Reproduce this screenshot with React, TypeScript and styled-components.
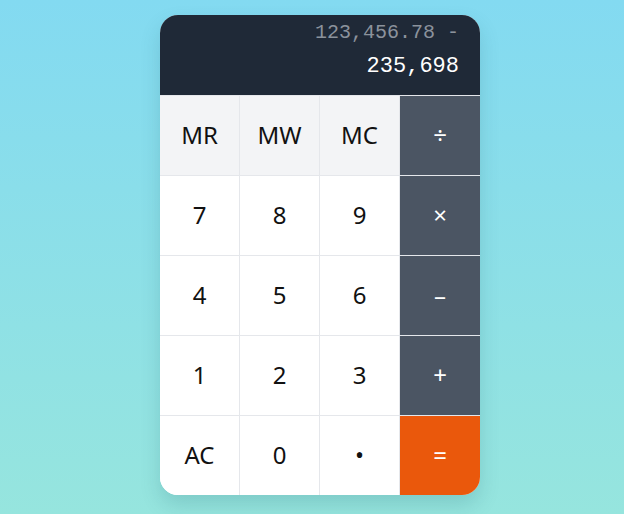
import React from "react";
import styled, { createGlobalStyle } from "styled-components";

const GlobalStyle = createGlobalStyle`
  * { box-sizing: border-box; }
  html, body { margin: 0; padding: 0; }
  body {
    width: 624px;
    height: 514px;
    overflow: hidden;
    background: linear-gradient(180deg, #83daf1 0%, #96e5de 100%);
    font-family: "Noto Sans", "Open Sans", sans-serif;
  }
`;

const Page = styled.div`
  width: 624px;
  height: 514px;
  display: flex;
  justify-content: center;
  align-items: flex-start;
  padding: 15px 0 0 16px;
`;

const Card = styled.div`
  width: 320px;
  border-radius: 18px;
  overflow: hidden;
  background: #ffffff;
  box-shadow: 0 10px 20px rgba(20, 90, 100, 0.18);
`;

const Display = styled.div`
  height: 80px;
  background: #1f2937;
  display: flex;
  flex-direction: column;
  align-items: flex-end;
  padding: 4px 21px 12px;
  font-family: "Liberation Mono", "Courier New", monospace;
`;

const History = styled.div`
  font-size: 20px;
  line-height: 28px;
  color: #8b929c;
  white-space: pre;
`;

const Current = styled.div`
  margin-top: 4px;
  font-size: 22px;
  line-height: 32px;
  color: #ffffff;
`;

const Keys = styled.div`
  display: grid;
  grid-template-columns: repeat(4, 80px);
  grid-auto-rows: 80px;
`;

type Variant = "memory" | "digit" | "op" | "equals";

const bg: Record<Variant, string> = {
  memory: "#f3f4f6",
  digit: "#ffffff",
  op: "#4b5563",
  equals: "#ea580c",
};

const Key = styled.button<{ $variant: Variant; $last?: boolean }>`
  all: unset;
  display: flex;
  align-items: center;
  justify-content: center;
  border-top: 1px solid #e5e7eb;
  border-right: ${(p) => (p.$last ? "none" : "1px solid #e5e7eb")};
  background: ${(p) => bg[p.$variant]};
  color: ${(p) => (p.$variant === "op" || p.$variant === "equals" ? "#ffffff" : "#111111")};
  font-family: "Noto Sans", "Open Sans", sans-serif;
  font-size: 24px;
  padding-bottom: 2px;
  cursor: pointer;
`;

const rows: { label: string; v: Variant }[][] = [
  [
    { label: "MR", v: "memory" },
    { label: "MW", v: "memory" },
    { label: "MC", v: "memory" },
    { label: "÷", v: "op" },
  ],
  [
    { label: "7", v: "digit" },
    { label: "8", v: "digit" },
    { label: "9", v: "digit" },
    { label: "×", v: "op" },
  ],
  [
    { label: "4", v: "digit" },
    { label: "5", v: "digit" },
    { label: "6", v: "digit" },
    { label: "–", v: "op" },
  ],
  [
    { label: "1", v: "digit" },
    { label: "2", v: "digit" },
    { label: "3", v: "digit" },
    { label: "+", v: "op" },
  ],
  [
    { label: "AC", v: "digit" },
    { label: "0", v: "digit" },
    { label: "•", v: "digit" },
    { label: "=", v: "equals" },
  ],
];

export default function App() {
  return (
    <>
      <GlobalStyle />
      <Page>
        <Card>
          <Display>
            <History>123,456.78 -</History>
            <Current>235,698</Current>
          </Display>
          <Keys>
            {rows.flatMap((row, r) =>
              row.map((k, c) => (
                <Key key={`${r}-${c}`} $variant={k.v} $last={c === 3}>
                  {k.label}
                </Key>
              ))
            )}
          </Keys>
        </Card>
      </Page>
    </>
  );
}
